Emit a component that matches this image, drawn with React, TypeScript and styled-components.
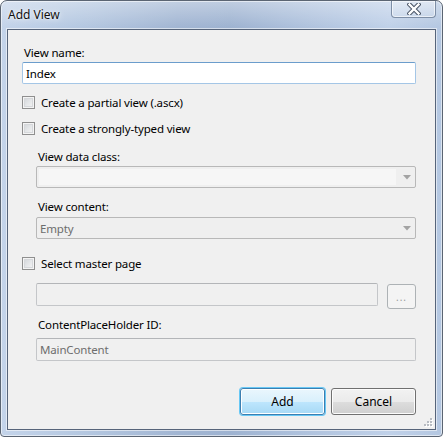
import React from "react";
import styled, { createGlobalStyle } from "styled-components";

const GlobalStyle = createGlobalStyle`
  html, body {
    margin: 0;
    padding: 0;
    background: #ffffff;
  }
  body {
    font-family: "Noto Sans", "Open Sans", sans-serif;
    font-size: 11.5px;
    letter-spacing: -0.15px;
  }
`;

type CheckRowProps = {
  children: React.ReactNode;
  top: number;
};

function CheckRow({ children, top }: CheckRowProps): JSX.Element {
  return (
    <CheckLine $top={top}>
      <CheckBox role="checkbox" aria-checked="false" />
      <span>{children}</span>
    </CheckLine>
  );
}

function CloseGlyph(): JSX.Element {
  return (
    <svg width="14" height="12" viewBox="0 0 14 12" aria-hidden="true">
      <path
        d="M2.5 1.5 L11.5 10.5 M11.5 1.5 L2.5 10.5"
        stroke="#4a5566"
        strokeWidth="4.4"
        strokeLinecap="square"
      />
      <path
        d="M2.5 1.5 L11.5 10.5 M11.5 1.5 L2.5 10.5"
        stroke="#ffffff"
        strokeWidth="2.4"
        strokeLinecap="square"
      />
    </svg>
  );
}

function ComboArrow(): JSX.Element {
  return (
    <svg width="8" height="5" viewBox="0 0 8 5" aria-hidden="true">
      <path d="M0 0 H8 L4 4.5 Z" fill="#a3a3a3" />
    </svg>
  );
}

function ResizeGrip(): JSX.Element {
  const dots: [number, number][] = [
    [6, 0],
    [3, 3],
    [6, 3],
    [0, 6],
    [3, 6],
    [6, 6],
  ];
  return (
    <Grip width="9" height="9" viewBox="0 0 9 9" aria-hidden="true">
      {dots.map(([x, y]) => (
        <React.Fragment key={`${x}-${y}`}>
          <rect x={x + 1} y={y + 1} width="2" height="2" fill="#ffffff" />
          <rect x={x} y={y} width="2" height="2" fill="#b8bcc2" />
        </React.Fragment>
      ))}
    </Grip>
  );
}

export default function App(): JSX.Element {
  return (
    <>
      <GlobalStyle />
      <Window>
        <TitleBar>
          <Title>Add View</Title>
          <CloseButton aria-label="Close">
            <CloseGlyph />
          </CloseButton>
        </TitleBar>
        <Client>
          <Label $top={15}>View name:</Label>
          <TextBox $top={2} $focused>
            Index
          </TextBox>

          <CheckRow top={11}>Create a partial view (.ascx)</CheckRow>
          <CheckRow top={11}>Create a strongly-typed view</CheckRow>

          <Indented>
            <Label $top={13}>View data class:</Label>
            <Combo $top={2}>
              <ComboField />
              <ComboArrow />
            </Combo>
            <Label $top={11}>View content:</Label>
            <Combo $top={3}>
              <ComboText>Empty</ComboText>
              <ComboArrow />
            </Combo>
          </Indented>

          <CheckRow top={17}>Select master page</CheckRow>

          <Indented>
            <BrowseRow>
              <TextBox $top={0} $grow />
              <BrowseButton disabled>...</BrowseButton>
            </BrowseRow>
            <Label $top={8}>ContentPlaceHolder ID:</Label>
            <TextBox $top={6} $disabled>
              MainContent
            </TextBox>
          </Indented>

          <ButtonRow>
            <DialogButton $default>Add</DialogButton>
            <DialogButton>Cancel</DialogButton>
          </ButtonRow>
          <ResizeGrip />
        </Client>
      </Window>
    </>
  );
}

const Window = styled.div`
  width: 443px;
  height: 437px;
  box-sizing: border-box;
  display: flex;
  flex-direction: column;
  border: 1px solid #5b6573;
  border-radius: 7px 7px 4px 4px;
  overflow: hidden;
  background:
    linear-gradient(180deg, rgba(255, 255, 255, 0.35) 0px, rgba(255, 255, 255, 0) 26px),
    linear-gradient(
      90deg,
      #c4d4ea 0%,
      #b5c8e1 18%,
      #a2b6d3 40%,
      #9eb3d1 52%,
      #b0c3de 70%,
      #c0d1e9 88%,
      #b4c7e1 100%
    );
  box-shadow: inset 0 0 0 1px rgba(255, 255, 255, 0.55);
`;

const TitleBar = styled.div`
  height: 28px;
  display: flex;
  justify-content: space-between;
  align-items: flex-start;
  padding: 0 6px 0 7px;
`;

const Title = styled.div`
  margin-top: 6px;
  font-size: 12px;
  letter-spacing: 0;
  line-height: 16px;
  color: #111;
  text-shadow: 0 0 6px rgba(255, 255, 255, 0.9), 0 0 2px rgba(255, 255, 255, 0.9);
`;

const CloseButton = styled.div`
  width: 45px;
  height: 18px;
  margin-top: -1px;
  box-sizing: border-box;
  display: flex;
  align-items: center;
  justify-content: center;
  border: 1px solid #7d8ea6;
  border-top: none;
  border-radius: 0 0 4px 4px;
  background: linear-gradient(180deg, rgba(255, 255, 255, 0.35), rgba(255, 255, 255, 0.12));
  box-shadow: inset 0 0 0 1px rgba(255, 255, 255, 0.6);
`;

const Client = styled.div`
  position: relative;
  flex: 1;
  margin: 0 6px 6px 6px;
  padding: 0 19px 14px 14px;
  display: flex;
  flex-direction: column;
  background: #f0f0f0;
  border: 1px solid #56647a;
  box-shadow: 0 0 0 1px rgba(255, 255, 255, 0.55);
`;

const Label = styled.div<{ $top: number }>`
  margin-top: ${(p) => p.$top}px;
  height: 15px;
  line-height: 15px;
  color: #000;
  padding-left: 2px;
`;

const TextBox = styled.div<{
  $top: number;
  $focused?: boolean;
  $disabled?: boolean;
  $grow?: boolean;
}>`
  margin-top: ${(p) => p.$top}px;
  height: ${(p) => (p.$focused ? 22 : 23)}px;
  box-sizing: border-box;
  padding: 0 3px;
  display: flex;
  align-items: center;
  flex: ${(p) => (p.$grow ? 1 : "none")};
  border: 1px solid ${(p) => (p.$focused ? "#a4c6e6" : "#c4c6c9")};
  border-top-color: ${(p) => (p.$focused ? "#6b9dcc" : "#b3b5b8")};
  border-radius: 2px;
  background: ${(p) => (p.$focused ? "#ffffff" : "#f0f0f0")};
  color: ${(p) => (p.$disabled ? "#6d6d6d" : "#000")};
`;

const CheckLine = styled.div<{ $top: number }>`
  margin-top: ${(p) => p.$top}px;
  height: 15px;
  display: flex;
  align-items: center;
  gap: 6px;
  color: #000;
`;

const CheckBox = styled.span`
  width: 13px;
  height: 13px;
  box-sizing: border-box;
  flex: none;
  border: 1px solid #8f8f8f;
  background: linear-gradient(135deg, #cfd2d6 0%, #e4e6e8 50%, #f7f7f7 100%);
  box-shadow: inset 0 0 0 1px #f4f4f4, inset 0 0 0 2px #d6d8db;
`;

const Indented = styled.div`
  display: flex;
  flex-direction: column;
  padding-left: 14px;
`;

const Combo = styled.div<{ $top: number }>`
  margin-top: ${(p) => p.$top}px;
  height: 22px;
  box-sizing: border-box;
  display: flex;
  align-items: center;
  padding: 2px 4px 2px 2px;
  gap: 7px;
  border: 1px solid #b8b8b8;
  border-radius: 2px;
  background: #efefef;

  svg {
    flex: none;
    margin-top: 1px;
  }
`;

const ComboField = styled.div`
  flex: 1;
  align-self: stretch;
  background: #f6f6f6;
`;

const ComboText = styled.div`
  flex: 1;
  padding-left: 1px;
  color: #6d6d6d;
`;

const BrowseRow = styled.div`
  margin-top: 12px;
  display: flex;
  align-items: flex-start;
  gap: 9px;
`;

const BrowseButton = styled.button`
  width: 29px;
  height: 25px;
  margin-top: 1px;
  padding: 0 0 4px 0;
  box-sizing: border-box;
  border: 1px solid #adb2b5;
  border-radius: 3px;
  background: #f4f4f4;
  font-family: "Noto Sans", sans-serif;
  font-size: 10px;
  color: #9a9a9a;
  display: flex;
  align-items: flex-end;
  justify-content: center;
  letter-spacing: 1px;
`;

const ButtonRow = styled.div`
  margin-top: auto;
  display: flex;
  justify-content: flex-end;
  gap: 6px;
`;

const DialogButton = styled.button<{ $default?: boolean }>`
  width: 85px;
  height: 27px;
  box-sizing: border-box;
  padding: 0;
  font-family: "Noto Sans", sans-serif;
  font-size: 12px;
  color: #000;
  border-radius: 3px;
  border: 1px solid ${(p) => (p.$default ? "#3c7fb1" : "#707070")};
  background: ${(p) =>
    p.$default
      ? "linear-gradient(180deg, #eaf6fd 0%, #d9f0fc 50%, #bee6fd 51%, #a7d9f5 100%)"
      : "linear-gradient(180deg, #f2f2f2 0%, #ebebeb 50%, #dddddd 51%, #cfcfcf 100%)"};
  box-shadow: ${(p) =>
    p.$default
      ? "inset 0 0 0 1px #ffffff, 0 0 0 1px #68c8f5"
      : "inset 0 0 0 1px #fcfcfc"};
`;

const Grip = styled.svg`
  position: absolute;
  right: 2px;
  bottom: 2px;
`;
